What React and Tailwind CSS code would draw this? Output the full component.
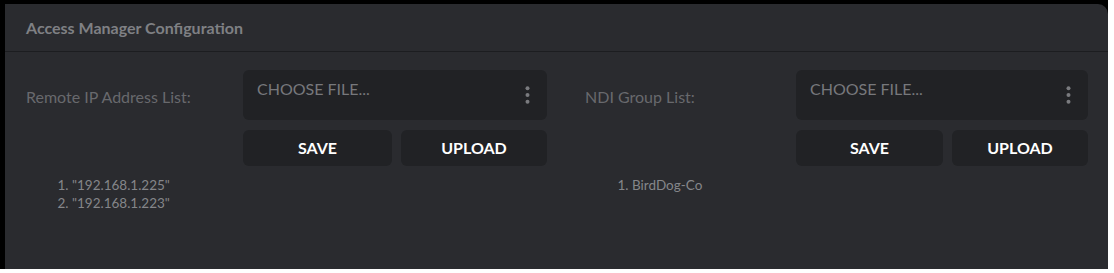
import React from 'react';

const font = { fontFamily: 'Lato, "Open Sans", sans-serif' };

const KebabIcon = () => (
    <svg width="5" height="18" viewBox="0 0 5 18" fill="#7a7b7f">
        <circle cx="2.5" cy="2.2" r="2" />
        <circle cx="2.5" cy="9" r="2" />
        <circle cx="2.5" cy="15.8" r="2" />
    </svg>
);

const FileSection = ({ label, labelWidth, inputWidth, saveWidth, items, listPad }) => (
    <div className="flex flex-col">
        <div className="flex">
            <div className={`${labelWidth} flex items-center h-[50px] pt-[3px] text-[16px] text-[#68696d]`}>{label}</div>
            <div className="flex flex-col gap-[10px]">
                <div className={`${inputWidth} h-[50px] rounded-md bg-[#212225] flex justify-between items-start pl-[14px] pr-[17px] pt-[7px]`}>
                    <span className="text-[16px] text-[#77787c]">CHOOSE FILE...</span>
                    <span className="pt-[9px]"><KebabIcon /></span>
                </div>
                <div className="flex gap-[9px]">
                    <button className={`${saveWidth} h-[36px] rounded-md bg-[#212225] text-white font-bold text-[16px]`}>SAVE</button>
                    <button className="flex-1 h-[36px] rounded-md bg-[#212225] text-white font-bold text-[16px]">UPLOAD</button>
                </div>
            </div>
        </div>
        <ol className={`list-decimal ${listPad} mt-[10px] text-[13.5px] leading-[18px] text-[#85868a]`}>
            {items.map((item) => (
                <li key={item}>{item}</li>
            ))}
        </ol>
    </div>
);

const App = () => {
    return (
        <div className="bg-white w-[1114px] h-[273px]" style={font}>
            <div className="bg-black w-[1108px] h-[269px] pt-[4px] pl-[5px]">
                <div className="bg-[#2a2b2f] h-full rounded-tr-[10px] flex flex-col">
                    <div className="h-[48px] border-b border-[#1c1d20] flex items-center pl-[21px]">
                        <h2 className="text-[16px] font-bold text-[#7f8084]">Access Manager Configuration</h2>
                    </div>
                    <div className="flex pl-[21px] pt-[18px]">
                        <FileSection
                            label="Remote IP Address List:"
                            labelWidth="w-[217px]"
                            inputWidth="w-[304px]"
                            saveWidth="w-[149px]"
                            items={['"192.168.1.225"', '"192.168.1.223"']}
                            listPad="pl-[46px]"
                        />
                        <div className="ml-[38px]">
                            <FileSection
                                label="NDI Group List:"
                                labelWidth="w-[211px]"
                                inputWidth="w-[292px]"
                                saveWidth="w-[147px]"
                                items={['BirdDog-Co']}
                                listPad="pl-[47px]"
                            />
                        </div>
                    </div>
                </div>
            </div>
        </div>
    );
};

export default App;
